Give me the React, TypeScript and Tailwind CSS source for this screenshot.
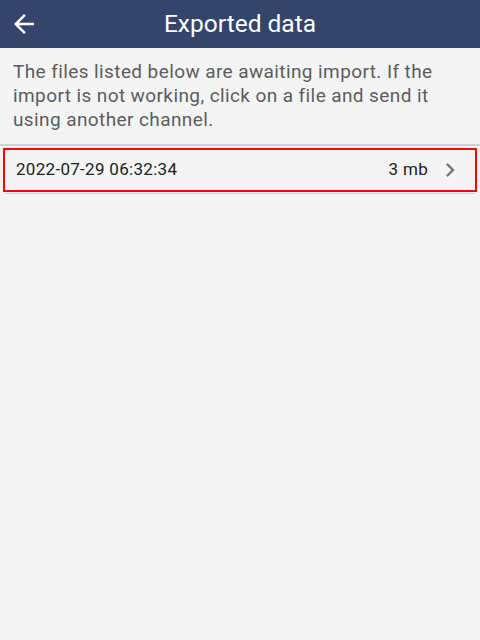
export default function App() {
  return (
    <div
      className="w-[480px] h-[640px] bg-[#f4f4f4] flex flex-col"
      style={{ fontFamily: "Roboto, 'Noto Sans', sans-serif" }}
    >
      <div className="h-[48px] bg-[#34446a] relative flex items-center justify-center shrink-0">
        <button className="absolute left-[9px] top-[9px] w-[30px] h-[30px] flex items-center justify-center">
          <svg width="30" height="30" viewBox="0 0 24 24" fill="#ffffff">
            <path d="M20 11H7.83l5.59-5.59L12 4l-8 8 8 8 1.41-1.41L7.83 13H20v-2z" />
          </svg>
        </button>
        <div className="text-white text-[24.5px] leading-none">Exported data</div>
      </div>
      <div className="px-[13px] pt-[12px] pb-[12px] text-[19px] leading-[24px] tracking-[0.4px] text-[#5c5c5c]">
        The files listed below are awaiting import. If the import is not working, click on a file and send it using another channel.
      </div>
      <div className="h-[2px] bg-[#d2d2d2]" />
      <div className="mt-[2px] mx-[3px] h-[44px] border-2 border-[#ff0000] flex items-center pl-[11px] pr-[11px]">
        <div className="flex-1 text-[17px] tracking-[0.3px] text-[#212121]">2022-07-29 06:32:34</div>
        <div className="text-[17px] tracking-[0.3px] text-[#212121]">3 mb</div>
        <svg className="ml-[8px]" width="28" height="28" viewBox="0 0 24 24" fill="#777777">
          <path d="M10 6L8.59 7.41 13.17 12l-4.58 4.59L10 18l6-6z" />
        </svg>
      </div>
      <div className="mt-[1px] mx-[5px] h-px bg-[#d2d2d2]" />
    </div>
  );
}
